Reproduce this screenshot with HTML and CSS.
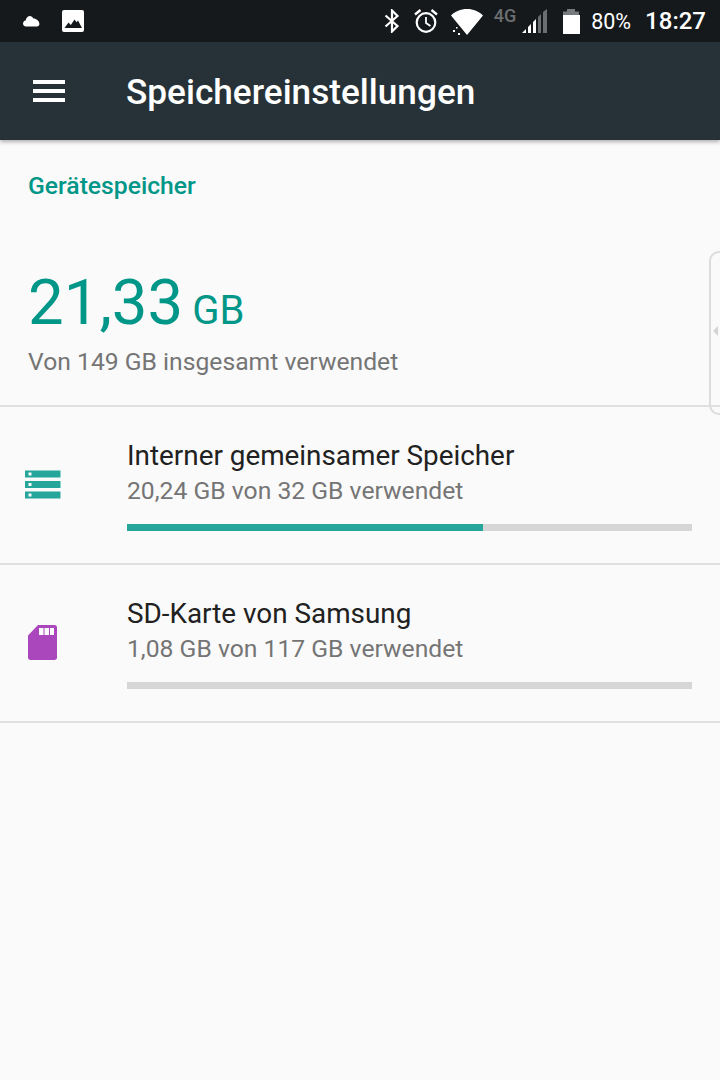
FILE: index.html
```html
<!DOCTYPE html>
<html lang="de">
<head>
    <meta charset="UTF-8">
    <meta name="viewport" content="width=device-width, initial-scale=1.0">
    <title>Speichereinstellungen</title>
    <link rel="stylesheet" href="styles.css">
</head>
<body>
    <div class="statusbar">
        <div class="status-left">
            <svg class="ic-cloud" width="18" height="12" viewBox="0 0 18 12"><path fill="#fff" d="M1 8.600C1 7 2.200 5.800 3.600 5.600 4 3 6 1 8 1c1.200 0 2.600 1 3.400 2.600C13.800 3.400 17.400 6 17.400 9c0 1.600-1 2.400-2.400 2.400H3.400C2 11.400 1 10.200 1 8.600z"/></svg>
            <svg class="ic-image" width="24" height="24" viewBox="0 0 24 24"><rect x="1" y="1" width="22" height="22" rx="2" fill="#fff"/><path fill="#15191c" d="M3.500 19l4-5.500 2.300 2.600 3.700-5.600 2 2.700 1.500-1.600 4 7.400z"/></svg>
        </div>
        <div class="status-right">
            <svg class="ic-bt" width="16" height="24" viewBox="0 0 16 24"><path fill="none" stroke="#fff" stroke-width="2.200" d="M1.500 6.500l12 10.500L8 22.500V1.500l5.500 5.500-12 10.500"/></svg>
            <svg class="ic-alarm" width="26" height="26" viewBox="0 0 26 26"><circle cx="13" cy="14.500" r="9.300" fill="none" stroke="#fff" stroke-width="2.200"/><path fill="none" stroke="#fff" stroke-width="1.800" d="M13 9v6l4.500 3"/><path fill="none" stroke="#fff" stroke-width="2.400" d="M2 6.500L7.500 2M24 6.500L18.500 2"/></svg>
            <svg class="ic-wifi" width="34" height="28" viewBox="0 0 34 28"><path fill="#fff" d="M1 7.500C5 3.500 10.500 1 17 1S29 3.500 33 7.500L17 27 12.500 21.500z"/><path fill="#fff" d="M3 22h2v2H3zM8 25h2v2H8zM6 19h1.500v1.500H6z"/></svg>
            <span class="net">4G</span>
            <svg class="ic-signal" width="26" height="26" viewBox="0 0 26 26"><path fill="#fff" d="M0 25l4-4v4zM6 25v-6l3-3v9zM11 25V14l3-3v14z"/><path fill="#6b6e70" d="M16 25V9l3-3v19zM21 25V4l4-3v24z"/></svg>
            <svg class="ic-batt" width="18" height="26" viewBox="0 0 18 26"><path fill="#777a7c" d="M5 1h8v2.500h4V8H1V3.500h4z"/><rect x="1" y="7" width="17" height="19" fill="#fff"/></svg>
            <span class="pct">80%</span>
            <span class="clock">18:27</span>
        </div>
    </div>

    <header class="toolbar">
        <div class="menu-btn"><span></span><span></span><span></span></div>
        <h1>Speichereinstellungen</h1>
    </header>

    <main class="content">
        <section class="summary">
            <h2>Gerätespeicher</h2>
            <div class="total"><span class="num">21,33</span><span class="unit">GB</span></div>
            <p class="total-sub">Von 149 GB insgesamt verwendet</p>
        </section>

        <div class="row">
            <div class="row-icon">
                <svg width="36" height="30" viewBox="0 0 36 30"><path fill="#26a69a" fill-rule="evenodd" d="M0 .5h35.500v7H0zM3.500 2.500v3h3v-3zM0 11h35.500v7H0zM3.500 13v3h3v-3zM0 21.500h35.500v7H0zM3.500 23.500v3h3v-3z"/></svg>
            </div>
            <div class="row-body">
                <div class="row-title">Interner gemeinsamer Speicher</div>
                <div class="row-sub">20,24 GB von 32 GB verwendet</div>
                <div class="bar"><div class="bar-fill" style="width: 63%"></div></div>
            </div>
        </div>

        <div class="row">
            <div class="row-icon">
                <svg width="30" height="36" viewBox="0 0 30 36"><path fill="#ab47bc" fill-rule="evenodd" d="M10 0h16.500C28 0 29 1 29 2.500v30c0 1.500-1 2.500-2.500 2.500h-24C1 35 0 34 0 32.500V10.500zM11 3v7h4.500V3zM16.500 3v7H21V3zM22 3v7h4V3z"/></svg>
            </div>
            <div class="row-body">
                <div class="row-title">SD-Karte von Samsung</div>
                <div class="row-sub">1,08 GB von 117 GB verwendet</div>
                <div class="bar"></div>
            </div>
        </div>

        <div class="edge-handle"><i></i></div>
    </main>
</body>
</html>
```

FILE: styles.css
```css
* {
    margin: 0;
    padding: 0;
    box-sizing: border-box;
}

body {
    font-family: 'Roboto', sans-serif;
    background-color: #fafafa;
    overflow: hidden;
    height: 1080px;
}

.statusbar {
    display: flex;
    justify-content: space-between;
    align-items: center;
    height: 42px;
    background-color: #15191c;
    color: #fff;
}

.status-left {
    display: flex;
    align-items: center;
    gap: 21px;
    padding-left: 22px;
}

.status-right {
    display: flex;
    align-items: center;
    padding-right: 14px;
}

.ic-bt { margin-right: 13px; }
.ic-alarm { margin-right: 11px; }
.ic-wifi { margin-right: 10px; margin-top: 2px; }

.net {
    font-size: 18px;
    font-weight: 500;
    color: #6b6e70;
    margin: -12px 0 0 0;
}

.ic-signal { margin: 0 14px 0 6px; }

.pct {
    font-size: 21.5px;
    margin-left: 11px;
}

.clock {
    font-size: 24px;
    font-weight: 500;
    margin-left: 14px;
}

.toolbar {
    display: flex;
    align-items: center;
    height: 98px;
    background-color: #263238;
    box-shadow: 0 2px 4px rgba(0, 0, 0, 0.3);
    position: relative;
    color: #fff;
}

.menu-btn {
    display: flex;
    flex-direction: column;
    gap: 5px;
    width: 32px;
    margin-left: 33px;
}

.menu-btn span {
    display: block;
    height: 4px;
    background-color: #fff;
}

.toolbar h1 {
    font-size: 35.2px;
    font-weight: 500;
    margin-left: 61px;
    padding-top: 2px;
}

.content {
    position: relative;
}

.summary {
    height: 267px;
    padding: 32px 28px 0;
    border-bottom: 2px solid #e0e0e0;
}

.summary h2 {
    font-size: 24.7px;
    font-weight: 500;
    line-height: 28px;
    color: #009688;
}

.total {
    display: flex;
    align-items: baseline;
    margin-top: 66px;
    line-height: 73px;
    color: #009688;
}

.num {
    font-size: 63.5px;
}

.unit {
    font-size: 40px;
    margin-left: 9px;
}

.total-sub {
    font-size: 24.7px;
    color: #757575;
    line-height: 30px;
}

.row {
    display: flex;
    height: 158px;
    border-bottom: 2px solid #e0e0e0;
}

.row-icon {
    display: flex;
    align-items: center;
    justify-content: center;
    width: 127px;
    padding-right: 42px;
}

.row-body {
    flex: 1;
    padding: 32px 28px 0 0;
}

.row-title {
    font-size: 27.85px;
    line-height: 34px;
    color: #212121;
}

.row-sub {
    font-size: 24.7px;
    line-height: 36px;
    color: #757575;
}

.bar {
    height: 7px;
    margin-top: 15px;
    background-color: #d6d6d6;
}

.bar-fill {
    height: 100%;
    background-color: #26a69a;
}

.edge-handle {
    position: absolute;
    top: 111px;
    right: 0;
    width: 11px;
    height: 164px;
    border: 2px solid #dcdcdc;
    border-right: none;
    border-radius: 10px 0 0 10px;
}

.edge-handle i {
    position: absolute;
    top: 73px;
    left: 2px;
    border: 5px solid transparent;
    border-left: none;
    border-right: 5px solid #d4d4d4;
}
```
